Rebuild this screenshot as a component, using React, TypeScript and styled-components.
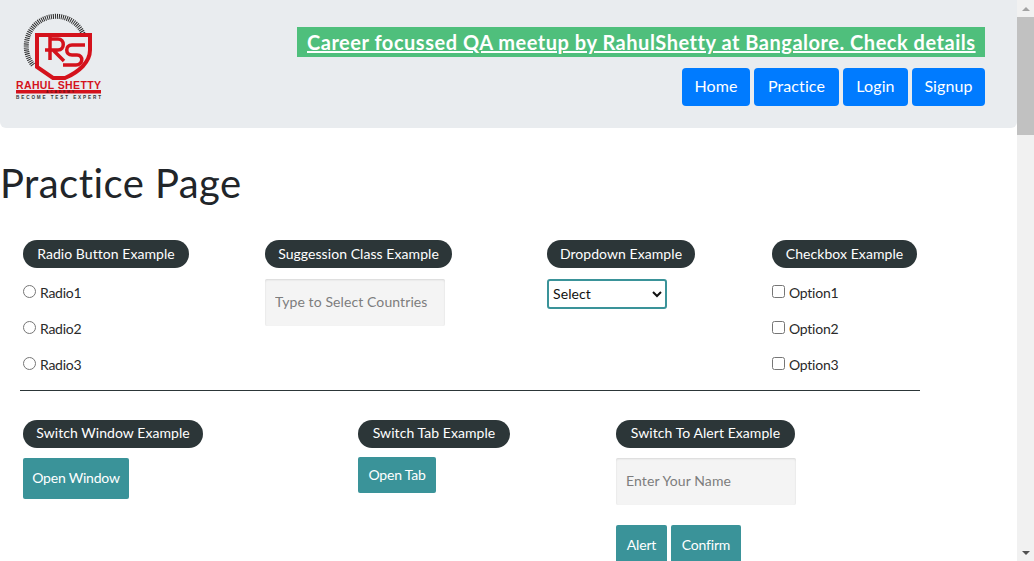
import React from 'react';
import styled, { createGlobalStyle } from 'styled-components';

const GlobalStyle = createGlobalStyle`
  html, body {
    margin: 0;
    height: 561px;
    overflow: hidden;
    background: #fff;
  }
  body {
    font-family: "Lato", "Noto Sans", sans-serif;
    color: #212529;
  }
  * { box-sizing: border-box; }
`;

const Shell = styled.div`
  display: flex;
  height: 561px;
`;

const Page = styled.main`
  flex: 1;
  min-width: 0;
  overflow: hidden;
`;

const Scrollbar = styled.aside`
  width: 17px;
  flex: none;
  display: flex;
  flex-direction: column;
  background: #f1f1f1;
`;

const ScrollArrow = styled.div<{ down?: boolean }>`
  height: 17px;
  flex: none;
  display: flex;
  align-items: center;
  justify-content: center;
  margin-top: ${(props) => (props.down ? 'auto' : '0')};
  &::before {
    content: '';
    border-left: 4px solid transparent;
    border-right: 4px solid transparent;
    ${(props) => (props.down ? 'border-top: 4px solid #505050;' : 'border-bottom: 4px solid #a3a3a3;')}
  }
`;

const ScrollThumb = styled.div`
  height: 118px;
  background: #c1c1c1;
`;

const Header = styled.header`
  height: 128px;
  background: #e9ecef;
  border-radius: 0 0 6px 6px;
  display: flex;
  justify-content: space-between;
  padding: 0 32px 0 15px;
`;

const LogoBox = styled.div`
  padding-top: 12px;
  line-height: 0;
`;

const HeaderRight = styled.div`
  display: flex;
  flex-direction: column;
  align-items: flex-end;
  padding-top: 27px;
`;

const Banner = styled.a`
  display: block;
  height: 30px;
  line-height: 30px;
  padding: 0 10px;
  width: 688px;
  background: #4fbf7c;
  color: #fff;
  font-size: 20px;
  font-weight: 700;
  letter-spacing: 0.52px;
  text-decoration: underline;
  white-space: nowrap;
`;

const Nav = styled.nav`
  display: flex;
  gap: 4px;
  margin-top: 11px;
`;

const NavButton = styled.a<{ $width: number }>`
  width: ${(props) => props.$width}px;
  height: 38px;
  padding-bottom: 3px;
  display: flex;
  align-items: center;
  justify-content: center;
  background: #007bff;
  color: #fff;
  border-radius: 4px;
  font-size: 16px;
  letter-spacing: 0.1px;
`;

const Title = styled.h1`
  margin: 31px 0 0;
  font-size: 40px;
  line-height: 48px;
  font-weight: 400;
  letter-spacing: 0.45px;
  height: 81px;
`;

const Legend = styled.div<{ $width: number }>`
  width: ${(props) => props.$width}px;
  height: 28px;
  padding-bottom: 3px;
  border-radius: 14px;
  background: #2c3638;
  color: #fff;
  font-size: 14px;
  letter-spacing: 0.06px;
  display: flex;
  align-items: center;
  justify-content: center;
  white-space: nowrap;
  margin-bottom: 11px;
`;

const TopRow = styled.section`
  display: grid;
  grid-template-columns: 242px 282px 225px 1fr;
  padding-left: 23px;
  height: 150px;
  ${Legend} {
    padding-bottom: 1px;
  }
`;

const BottomRow = styled.section`
  display: grid;
  grid-template-columns: 335px 258px 1fr;
  padding-left: 23px;
  margin-top: 29px;
`;

const Column = styled.div`
  display: flex;
  flex-direction: column;
  align-items: flex-start;
`;

const OptionList = styled.div`
  display: flex;
  flex-direction: column;
  gap: 12px;
  margin-top: 2px;
`;

const OptionLabel = styled.label`
  display: flex;
  align-items: flex-start;
  height: 24px;
  font-size: 14px;
  line-height: 24px;
  letter-spacing: -0.25px;
  color: #2a2a2a;
`;

const OptionInput = styled.input`
  width: 13px;
  height: 13px;
  margin: 4px 4px 0 0;
  flex: none;
`;

const TextField = styled.input<{ $top?: number }>`
  width: 180px;
  height: 47px;
  border: 0;
  border-radius: 2px;
  background: #f4f4f4;
  box-shadow: inset 0 1px 2px rgba(0, 0, 0, 0.12);
  padding: 0 10px 2px;
  font: 14px "Lato", "Noto Sans", sans-serif;
  letter-spacing: 0.1px;
  margin-top: ${(props) => props.$top ?? 0}px;
  &::placeholder { color: #7d7d7d; opacity: 1; }
`;

const Dropdown = styled.select`
  width: 120px;
  height: 30px;
  border: 2px solid #3a9399;
  border-radius: 3px;
  background: #fff;
  color: #111;
  padding: 0 0 2px;
  font: 14px "Lato", "Noto Sans", sans-serif;
  letter-spacing: 0.1px;
`;

const ActionButton = styled.button<{ $width: number; $height: number; $top?: number }>`
  width: ${(props) => props.$width}px;
  height: ${(props) => props.$height}px;
  margin-top: ${(props) => props.$top ?? 0}px;
  padding: 0 0 2px;
  border: 0;
  border-radius: 2px;
  background: #3a9399;
  color: #fff;
  font: 14px "Lato", "Noto Sans", sans-serif;
  letter-spacing: -0.2px;
`;

const ButtonRow = styled.div`
  display: flex;
  gap: 4px;
  margin-top: 20px;
`;

const Divider = styled.hr`
  width: 900px;
  height: 1px;
  margin: 0 0 0 20px;
  border: 0;
  background: #2c3638;
`;

const LogoText = styled.text<{ $size: number }>`
  font-family: "Liberation Sans", sans-serif;
  font-size: ${(props) => props.$size}px;
`;

const Logo = () => (
  <svg width="88" height="92" viewBox="0 0 88 92" aria-label="Rahul Shetty logo">
    <path d="M18 53 A29.8 29.8 0 1 1 70 27" fill="none" stroke="#2b2b2b" strokeWidth="5" strokeDasharray="1 1" />
    <path d="M22 23 H75 V38 C75 50 64 60 50 66 H38 L22 55 Z" fill="#e9ecef" stroke="#d4121c" strokeWidth="4" />
    <path d="M35 25 V48 M30 38 H43 C50 38 50 27 43 27 H35 M38 38 L49 49" fill="none" stroke="#d4121c" strokeWidth="3.5" />
    <path d="M70 33 H57 C50 33 50 43 57 43 H62 C69 43 68 53 61 53 H48" fill="none" stroke="#d4121c" strokeWidth="3.5" />
    <LogoText x="1" y="77" $size="10.5" textLength="85" fill="#d4121c" fontWeight="700">RAHUL SHETTY</LogoText>
    <rect x="1" y="78" width="85" height="3.5" fill="#d4121c" />
    <LogoText x="31" y="81.3" $size="3.4" textLength="28" fill="#5a1015" fontWeight="700">ACADEMY</LogoText>
    <LogoText x="1" y="86.5" $size="4.6" textLength="85" fill="#333" fontWeight="700">BECOME TEST EXPERT</LogoText>
  </svg>
);

const radios = ['Radio1', 'Radio2', 'Radio3'];
const options = ['Option1', 'Option2', 'Option3'];
const navItems: [string, number][] = [['Home', 68], ['Practice', 85], ['Login', 65], ['Signup', 73]];

export default function App() {
  return (
    <Shell>
      <GlobalStyle />
      <Page>
        <Header>
          <LogoBox>
            <Logo />
          </LogoBox>
          <HeaderRight>
            <Banner>Career focussed QA meetup by RahulShetty at Bangalore. Check details</Banner>
            <Nav>
              {navItems.map(([name, width]) => (
                <NavButton key={name} $width={width}>{name}</NavButton>
              ))}
            </Nav>
          </HeaderRight>
        </Header>
        <Title>Practice Page</Title>
        <TopRow>
          <Column>
            <Legend $width={166}>Radio Button Example</Legend>
            <OptionList>
              {radios.map((name) => (
                <OptionLabel key={name}>
                  <OptionInput type="radio" name="radio" />
                  {name}
                </OptionLabel>
              ))}
            </OptionList>
          </Column>
          <Column>
            <Legend $width={187}>Suggession Class Example</Legend>
            <TextField placeholder="Type to Select Countries" />
          </Column>
          <Column>
            <Legend $width={148}>Dropdown Example</Legend>
            <Dropdown>
              <option>Select</option>
            </Dropdown>
          </Column>
          <Column>
            <Legend $width={145}>Checkbox Example</Legend>
            <OptionList>
              {options.map((name) => (
                <OptionLabel key={name}>
                  <OptionInput type="checkbox" />
                  {name}
                </OptionLabel>
              ))}
            </OptionList>
          </Column>
        </TopRow>
        <Divider />
        <BottomRow>
          <Column>
            <Legend $width={180}>Switch Window Example</Legend>
            <ActionButton $width={106} $height={41} $top={-1}>Open Window</ActionButton>
          </Column>
          <Column>
            <Legend $width={152}>Switch Tab Example</Legend>
            <ActionButton $width={78} $height={36} $top={-2}>Open Tab</ActionButton>
          </Column>
          <Column>
            <Legend $width={179}>Switch To Alert Example</Legend>
            <TextField placeholder="Enter Your Name" $top={-1} />
            <ButtonRow>
              <ActionButton $width={51} $height={41}>Alert</ActionButton>
              <ActionButton $width={70} $height={41}>Confirm</ActionButton>
            </ButtonRow>
          </Column>
        </BottomRow>
      </Page>
      <Scrollbar>
        <ScrollArrow />
        <ScrollThumb />
        <ScrollArrow down />
      </Scrollbar>
    </Shell>
  );
}
